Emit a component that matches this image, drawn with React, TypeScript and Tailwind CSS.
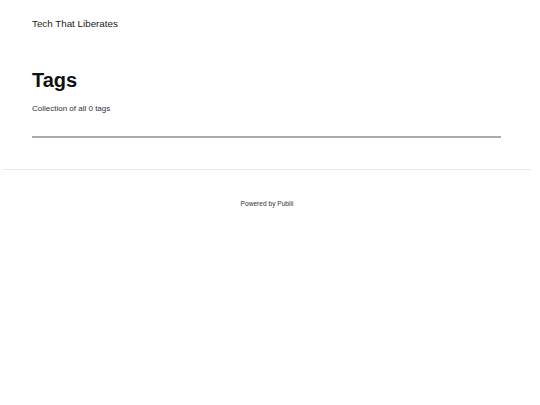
import React from 'react';

const App: React.FC = () => {
  return (
    <div className="min-h-[405px] w-[540px] bg-white text-[#222] font-['Liberation_Sans',Arial,sans-serif]">
      <header className="px-[32px] pt-[18px]">
        <a className="block text-[9.8px] leading-[12px] text-[#222]">Tech That Liberates</a>
      </header>

      <main className="px-[32px] pt-[38px]">
        <h1 className="text-[20px] leading-[24px] font-bold text-[#111]">Tags</h1>
        <p className="mt-[12px] text-[8px] leading-[10px] text-[#333]">Collection of all 0 tags</p>
        <hr className="mt-[22px] w-[469px] border-0 border-t-2 border-[#aaa]" />
      </main>

      <footer className="mx-[3px] mt-[31px] w-[528px] border-t border-[#e8e8e8] pt-[30px] text-center">
        <p className="text-[6.6px] leading-[8px] text-[#333]">Powered by Publii</p>
      </footer>
    </div>
  );
};

export default App;
